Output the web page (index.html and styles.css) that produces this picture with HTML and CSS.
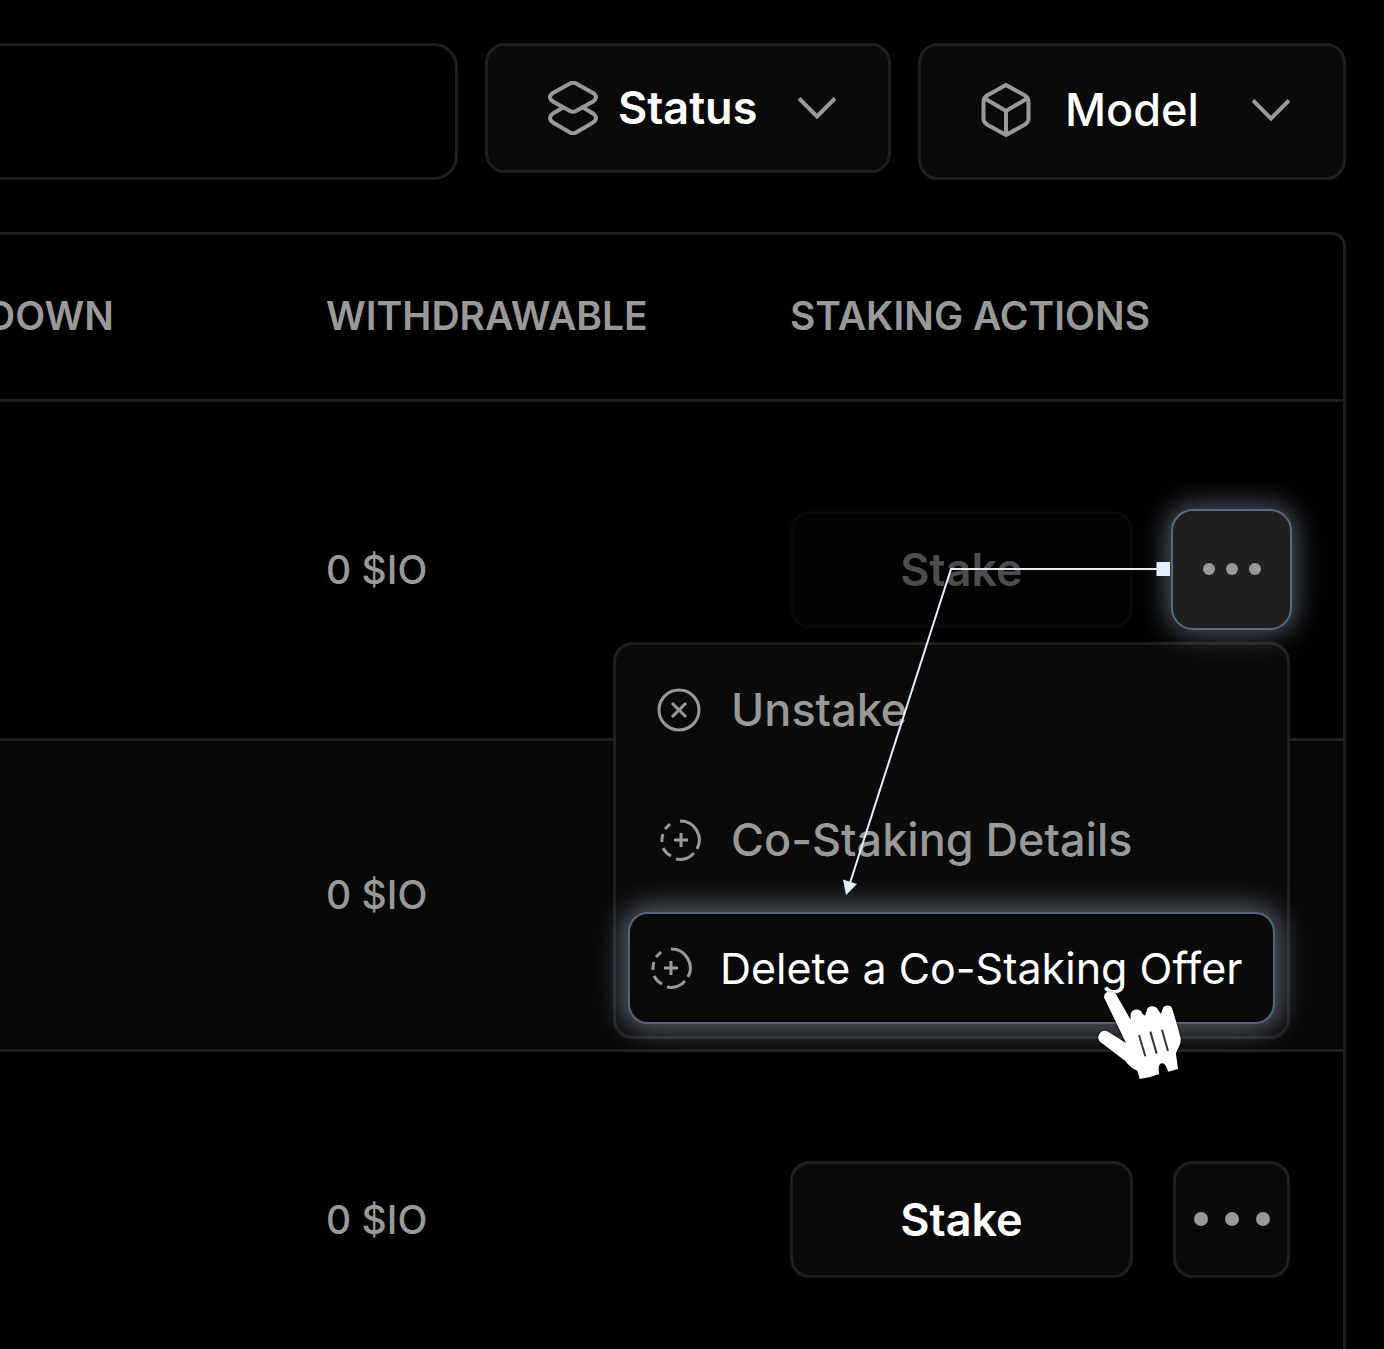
FILE: index.html
```
<!DOCTYPE html>
<html lang="en">
<head>
<meta charset="utf-8">
<title>Staking</title>
<link rel="stylesheet" href="styles.css">
</head>
<body>
<main class="page">
  <div class="toolbar">
    <input class="search" type="text" aria-label="Search">
    <label class="filter filter-status">
      <svg class="filter-icon" viewBox="0 0 50 54" aria-hidden="true"><path d="M28 2.500 45 12Q51 16 45 20.500L28 30Q25 31.500 22 30L5 20.500Q-1 16 5 12L22 2.500Q25 1 28 2.500ZM15 26.500 5 32.500Q-1 37 5 41.500L22 51.500Q25 53 28 51.500L45 41.500Q51 37 45 32.500L35 26.500"/></svg>
      <select aria-label="Status"><option>Status</option></select>
      <svg class="chevron" viewBox="0 0 38 22" aria-hidden="true"><path d="M1 1.500 19 19.500 37 1.500"/></svg>
    </label>
    <label class="filter filter-model">
      <svg class="filter-icon" viewBox="0 0 50 54" aria-hidden="true"><path d="M25 2 44 12.500Q47.500 15 47.500 19V36Q47.500 39 44 41.500L25 52 6 41.500Q2.500 39 2.500 36V19Q2.500 15 6 12.500ZM3 15 25 28 47 15M25 28V52"/></svg>
      <select aria-label="Model"><option>Model</option></select>
      <svg class="chevron" viewBox="0 0 38 22" aria-hidden="true"><path d="M1 1.500 19 19.500 37 1.500"/></svg>
    </label>
  </div>

  <table class="stakes">
    <thead>
      <tr><th class="col-down">DOWN</th><th class="col-amount">WITHDRAWABLE</th><th class="col-actions">STAKING ACTIONS</th></tr>
    </thead>
    <tbody>
      <tr class="tall">
        <td></td>
        <td>0 $IO</td>
        <td>
          <div class="actions">
            <button class="stake" type="button" disabled>Stake</button>
            <button class="more more-active" type="button" aria-label="More actions">
              <svg viewBox="0 0 60 14" aria-hidden="true"><circle cx="7" cy="7" r="6"/><circle cx="30" cy="7" r="6"/><circle cx="53" cy="7" r="6"/></svg>
            </button>
            <div class="menu">
              <button class="item" type="button">
                <svg viewBox="0 0 44 44" aria-hidden="true"><circle cx="22" cy="22" r="20"/><path d="m15 15 14 14M29 15 15 29"/></svg>
                Unstake
              </button>
              <button class="item" type="button">
                <svg viewBox="0 0 44 44" aria-hidden="true"><path d="M23 3A19 19 0 0 1 40 31M37 35A19 19 0 0 1 19 41M14 38A19 19 0 0 1 6 30M5 24A19 19 0 0 1 6 16M8 11 13 6M24 15V29M17 22H31"/></svg>
                Co-Staking Details
              </button>
              <button class="item item-active" type="button">
                <svg viewBox="0 0 44 44" aria-hidden="true"><path d="M22 3A19 19 0 0 1 39 31M36 35A19 19 0 0 1 18 41M13 38A19 19 0 0 1 5 30M4 24A19 19 0 0 1 5 16M7 11 12 6M22 15V29M15 22H29"/></svg>
                Delete a Co-Staking Offer
              </button>
            </div>
            <svg class="pointer" viewBox="790 512 500 570" aria-hidden="true">
              <path class="line" d="M1158 570H951L850 884"/>
              <path class="ends" d="M1156.500 563H1170V577H1156.500ZM843 880.500 857 885 846 896Z"/>
              <g class="hand" transform="translate(1040 880) scale(.3333)">
                <path class="palm" d="M193 358C188 335 218 332 228 346L272 422 272 405C276 387 302 387 307 404L315 410 320 395C322 377 350 378 355 394L363 405 367 392C370 376 394 376 397 390L412 440 422 478C424 500 410 510 408 525L414 570 385 578 378 562C370 546 357 552 356 567L357 585Q330 597 299 600L292 575Q275 570 255 545L178 487C168 470 185 448 204 458L258 492 238 450Z"/>
                <path class="slits" d="M297 468 316 532M331 458 350 524M366 452 384 516"/>
              </g>
            </svg>
          </div>
        </td>
      </tr>
      <tr class="striped">
        <td></td>
        <td>0 $IO</td>
        <td></td>
      </tr>
      <tr class="tall">
        <td></td>
        <td>0 $IO</td>
        <td>
          <div class="actions">
            <button class="stake" type="button">Stake</button>
            <button class="more" type="button" aria-label="More actions">
              <svg class="wide" viewBox="0 0 76 14" aria-hidden="true"><circle cx="7" cy="7" r="7"/><circle cx="38" cy="7" r="7"/><circle cx="69" cy="7" r="7"/></svg>
            </button>
          </div>
        </td>
      </tr>
    </tbody>
  </table>
</main>
</body>
</html>
```
FILE: styles.css
```
:root {
  --line: #1f1f1f;
  --panel: #0a0a0a;
  --muted: #999;
  --glow: 0 0 28px 6px rgba(155, 175, 208, .52);
}

* { box-sizing: border-box; }

body {
  margin: 0;
  background: #000;
  color: var(--muted);
  font-family: Inter, "Liberation Sans", sans-serif;
}

button, select, input { font: inherit; color: inherit; }
svg { flex: none; fill: none; stroke: var(--muted); stroke-width: 3; }

/* The left edge of the view runs off the window */
.page {
  height: 100vh;
  margin-left: -16px;
  padding: 43px 38px 0 0;
  overflow: hidden;
}

.toolbar {
  display: flex;
  align-items: flex-start;
  gap: 27px;
  height: 189px;
}

.search {
  flex: 1;
  min-width: 0;
  height: 137px;
  background: #000;
  border: 3px solid var(--line);
  border-radius: 0 24px 24px 0;
}

.filter {
  display: flex;
  align-items: center;
  background: var(--panel);
  border: 3px solid var(--line);
  border-radius: 20px;
  color: #fff;
  font-size: 45px;
}
.filter select {
  flex: 1;
  appearance: none;
  padding: 0;
  border: 0;
  background: none;
  line-height: 60px;
}
.filter-icon { width: 50px; height: 54px; stroke-width: 4; }
.chevron { width: 38px; height: 22px; stroke-width: 4; }
.filter-status { width: 406px; height: 130px; padding: 0 52px 0 60px; gap: 20px; font-weight: 600; }
.filter-model { width: 428px; height: 137px; padding: 0 53px 3px 60px; gap: 34px; font-weight: 500; }

.stakes {
  width: 100%;
  table-layout: fixed;
  border: 3px solid var(--line);
  border-radius: 14px;
  border-spacing: 0;
  font-size: 39px;
  font-weight: 500;
}
.stakes th, .stakes td {
  padding: 0;
  border-bottom: 3px solid var(--line);
  text-align: left;
}
.stakes th { height: 167px; padding-bottom: 3px; font-weight: 600; }
.stakes td { height: 311px; padding-bottom: 2px; }
.stakes .tall td { height: 339px; }
.stakes .striped { background: #080808; }
.col-down { width: 339px; }
.col-amount { width: 464px; }

.actions {
  position: relative;
  display: flex;
  gap: 40px;
  width: 500px;
}
.stake, .more {
  height: 117px;
  padding: 0;
  background: var(--panel);
  border: 3px solid var(--line);
  border-radius: 20px;
}
.stake { flex: 1; color: #fff; font-size: 45px; font-weight: 600; }
.stake:disabled { opacity: .3; }
.more { display: grid; place-items: center; width: 117px; }
.more svg { width: 60px; height: 14px; fill: var(--muted); stroke: none; }
.more .wide { width: 76px; }
.more-active {
  position: relative;
  z-index: 2;
  background: #202020;
  border-color: #202020;
  outline: 2px solid #566a80;
  box-shadow: var(--glow);
}

.menu {
  position: absolute;
  z-index: 1;
  top: 131px;
  right: 0;
  width: 677px;
  padding: 0 12px 12px;
  background: var(--panel);
  border: 3px solid var(--line);
  border-radius: 20px;
}
.item {
  display: flex;
  align-items: center;
  gap: 30px;
  width: 100%;
  height: 130px;
  padding: 0 0 0 29px;
  background: none;
  border: 0;
  font-size: 45px;
  font-weight: 500;
}
.item svg { width: 44px; height: 44px; }
.item-active {
  height: 112px;
  margin-top: 7px;
  padding: 0 0 0 19px;
  gap: 27px;
  background: var(--panel);
  border: 2px solid #53667c;
  border-radius: 20px;
  box-shadow: var(--glow);
  color: #fff;
  font-size: 43px;
  font-weight: 400;
}

.pointer {
  position: absolute;
  z-index: 3;
  top: 0;
  left: 0;
  width: 500px;
  height: 570px;
  pointer-events: none;
}
.pointer .line { stroke: #e4f0ff; stroke-width: 2; }
.pointer .ends { fill: #e4f0ff; stroke: none; }
.hand { filter: drop-shadow(0 2px 3px #000); }
.hand .palm { fill: #fff; stroke: none; }
.hand .slits { stroke: #333; stroke-width: 6; }
```
